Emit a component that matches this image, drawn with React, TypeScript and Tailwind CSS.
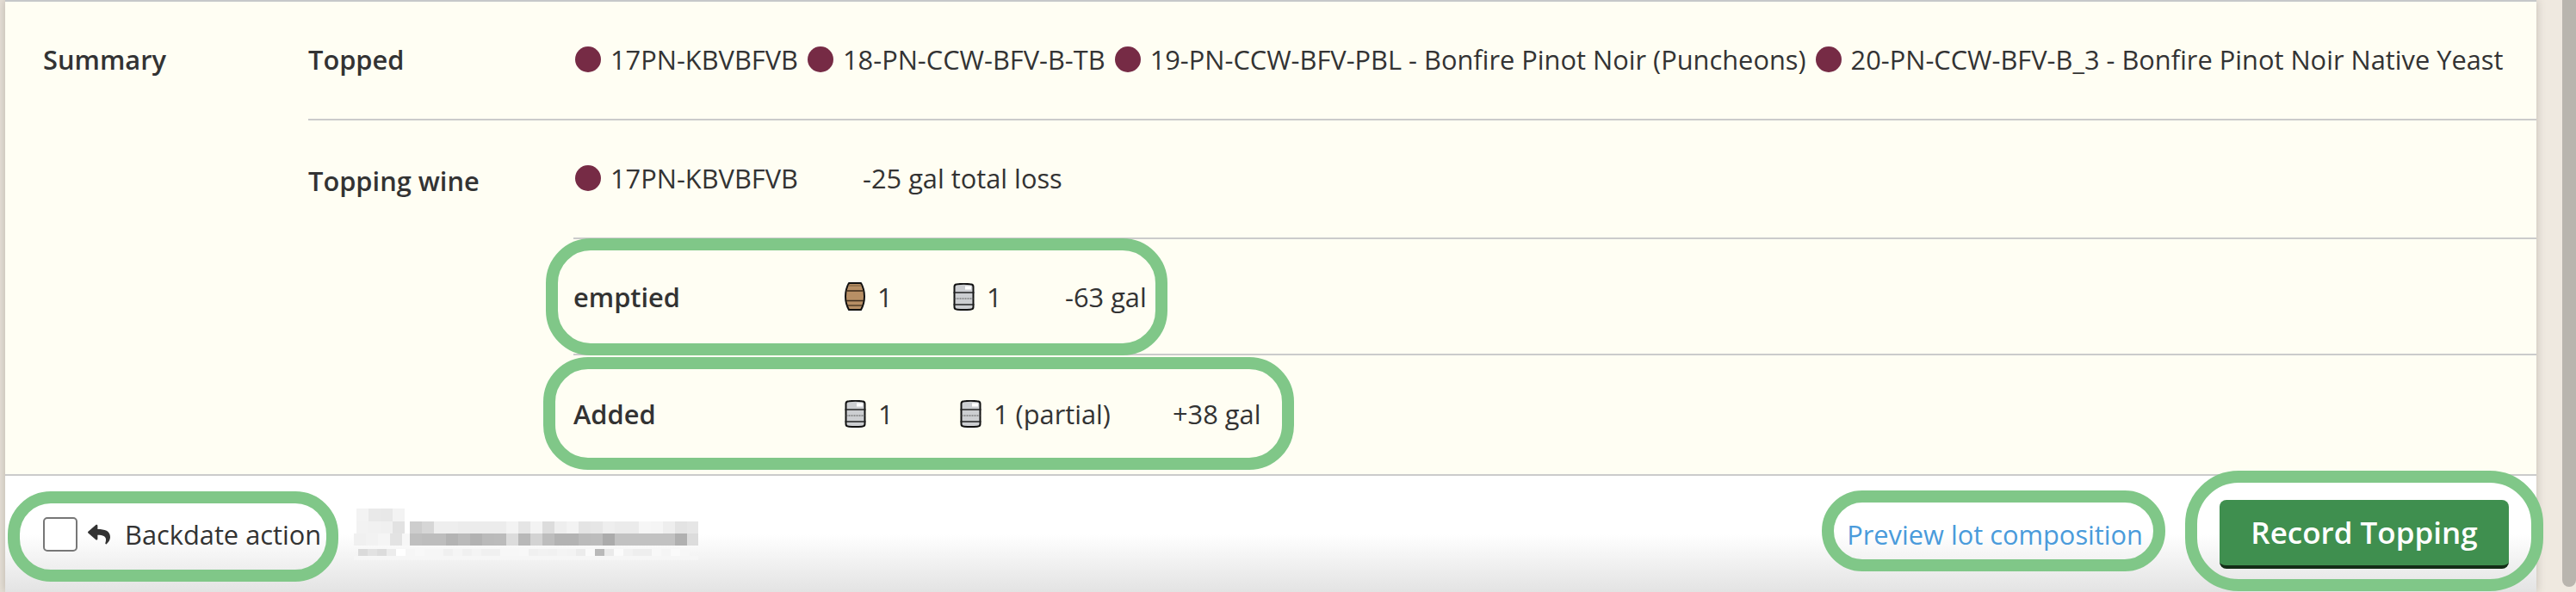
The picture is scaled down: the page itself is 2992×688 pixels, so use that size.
import React from "react";
import { FaReply } from "react-icons/fa";

function Dot() {
  return <span className="block w-[30px] h-[30px] shrink-0 rounded-full bg-[#762b45]" />;
}

function Ring({ className }: { className: string }) {
  return <div className={"absolute z-10 border-[14px] border-[#80c788] pointer-events-none " + className} />;
}

function Barrel() {
  return (
    <svg width="24" height="33" viewBox="0 0 24 33" className="block shrink-0">
      <path d="M5 1 H19 Q23 8 23 16.500 Q23 25 19 32 H5 Q1 25 1 16.500 Q1 8 5 1 Z" fill="#b78f65" stroke="#111" strokeWidth="2" strokeLinejoin="round" />
      <path d="M3 10 H21" stroke="#3a2a1a" strokeWidth="1.500" />
      <path d="M2 21.500 H22" stroke="#3a2a1a" strokeWidth="1.500" />
      <path d="M3.500 27 H20.500" stroke="#3a2a1a" strokeWidth="1.200" />
      <path d="M4 4 H20" stroke="#7a5c3c" strokeWidth="1" />
    </svg>
  );
}

function Steel() {
  return (
    <svg width="25" height="32" viewBox="0 0 25 32" className="block shrink-0">
      <path d="M1.500 4 Q1.500 1.500 5 1.300 Q12.500 0.300 20 1.300 Q23.500 1.500 23.500 4 V28 Q23.500 30.500 20 30.700 Q12.500 31.300 5 30.700 Q1.500 30.500 1.500 28 Z" fill="#ccced1" stroke="#111" strokeWidth="2" />
      <rect x="14" y="3.500" width="7" height="4" fill="#fff" />
      <path d="M0.500 11 H24.500" stroke="#222" strokeWidth="1.500" />
      <path d="M1.500 18 H23.500" stroke="#555" strokeWidth="1" strokeDasharray="2 1" />
      <path d="M0.500 25 H24.500" stroke="#222" strokeWidth="1.500" />
    </svg>
  );
}

const mosaicRows: { y: number; h: number; x: number; w: number; c: string[] }[] = [
  { y: 14, h: 15, x: 3, w: 14, c: ["#f3f3f3", "#e9e9e9", "#e8e8e8", "#f3f3f3"] },
  { y: 29, h: 14, x: 3, w: 14, c: ["#f2f2f2", "#f1f1f1", "#f0f0f0", "#e2e2e2"] },
  { y: 29, h: 14, x: 65, w: 14, c: ["#cdcdcd", "#d6d6d6", "#eeeeee", "#eeeeee", "#ececec", "#ececec", "#ececec", "#ececec", "#f3f3f3", "#e5e5e5", "#f3f3f3", "#dcdcdc", "#eeeeee", "#f3f3f3", "#e4e4e4", "#e6e6e6", "#eeeeee", "#ebebeb", "#ebebeb", "#f6f6f6", "#f5f5f5", "#eeeeee", "#e3e3e3", "#e6e6e6"] },
  { y: 43, h: 14, x: 0, w: 14, c: ["#f0f0f0", "#f2f2f2", "#f5f5f5", "#e3e3e3", "#f7f7f7"] },
  { y: 43, h: 14, x: 65, w: 14, c: ["#bfbfbf", "#bdbdbd", "#bdbdbd", "#b3b3b3", "#bababa", "#b2b2b2", "#bababa", "#bbbbbb", "#dcdcdc", "#b8b8b8", "#d3d3d3", "#bdbdbd", "#b3b3b3", "#b3b3b3", "#bbbbbb", "#bcbcbc", "#ababab", "#c2c2c2", "#c2c2c2", "#c2c2c2", "#c2c2c2", "#c2c2c2", "#b0b0b0", "#dcdcdc"] },
  { y: 61, h: 8, x: 5, w: 11, c: ["#dadada", "#e2e2e2", "#dcdcdc", "#ececec", "#ffffff", "#f6f6f6", "#f8f8f8", "#f6f6f6", "#f6f6f6", "#f0f0f0", "#f5f5f5", "#f0f0f0", "#f4f4f4", "#f0f0f0", "#f0f0f0", "#f7f7f7", "#f7f7f7", "#f8f8f8", "#f0f0f0", "#f2f2f2", "#f1f1f1", "#f4f4f4", "#f3f3f3", "#ececec", "#fafafa", "#b9b9b9", "#eaeaea", "#fbfbfb", "#f2f2f2", "#eeeeee", "#eeeeee", "#f8f8f8", "#f5f5f5", "#fafafa", "#f7f7f7"] },
];

function Mosaic() {
  return (
    <svg width="400" height="60" viewBox="0 14 400 60" className="block shrink-0 ml-[38px]">
      {mosaicRows.map((r, i) =>
        r.c.map((c, j) => <rect key={i + "-" + j} x={r.x + j * r.w} y={r.y} width={r.w} height={r.h} fill={c} />)
      )}
      <rect x="0" y="69" width="400" height="5" fill="#f7f7f7" opacity="0.7" />
    </svg>
  );
}

function Lot({ name }: { name: string }) {
  return (
    <span className="flex items-center gap-[11px] whitespace-nowrap h-[40px]">
      <Dot />
      <span>{name}</span>
    </span>
  );
}

export default function App() {
  return (
    <div className="flex w-[2992px] h-[688px] overflow-hidden bg-[#efe9e0] text-[#333333] text-[30.8px] leading-[40px] font-['Open_Sans',sans-serif]">
      <div className="w-[6px] shrink-0 bg-[#e6e0d7]" />
      <div className="relative z-10 flex flex-col w-[2940px] shrink-0 shadow-[0_0_10px_rgba(90,80,70,0.3)]">
        <div className="flex h-[553px] shrink-0 bg-[#fffef3] border-t-[2px] border-t-[#c6c8c9] border-b-[2px] border-b-[#cbcbcb]">
          <div className="w-[352px] shrink-0 pl-[44px] pt-[47px] font-semibold">Summary</div>
          <div className="flex-1 flex flex-col min-w-0">
            <div className="flex h-[138px] shrink-0 items-start border-b-[2px] border-[#cbcbcb] pt-[47px]">
              <div className="w-[310px] shrink-0 font-semibold">Topped</div>
              <div className="flex items-start gap-[11px] whitespace-nowrap">
                <Lot name="17PN-KBVBFVB" />
                <Lot name="18-PN-CCW-BFV-B-TB" />
                <Lot name="19-PN-CCW-BFV-PBL - Bonfire Pinot Noir (Puncheons)" />
                <Lot name="20-PN-CCW-BFV-B_3 - Bonfire Pinot Noir Native Yeast" />
              </div>
            </div>
            <div className="flex flex-1">
              <div className="w-[308px] shrink-0 pt-[50px] font-semibold">Topping wine</div>
              <div className="flex-1 flex flex-col min-w-0">
                <div className="flex h-[138px] shrink-0 items-center pl-[2px] pb-[2px] border-b-[2px] border-[#cbcbcb]">
                  <Lot name="17PN-KBVBFVB" />
                  <span className="ml-[75px] whitespace-nowrap">-25 gal total loss</span>
                </div>
                <div className="relative flex h-[135px] shrink-0 items-center border-b-[2px] border-[#cbcbcb]">
                  <Ring className="left-[-32px] top-[-1px] w-[722px] h-[136px] rounded-[52px]" />
                  <div className="w-[315px] font-semibold">emptied</div>
                  <div className="flex items-center gap-[14px] w-[126px]"><Barrel /><span>1</span></div>
                  <div className="flex items-center gap-[14px] w-[130px]"><Steel /><span>1</span></div>
                  <div className="whitespace-nowrap">-63 gal</div>
                </div>
                <div className="relative flex flex-1 items-center pb-[2px]">
                  <Ring className="left-[-35px] top-[2px] w-[872px] h-[131px] rounded-[52px]" />
                  <div className="w-[315px] font-semibold">Added</div>
                  <div className="flex items-center gap-[14px] w-[134px]"><Steel /><span>1</span></div>
                  <div className="flex items-center gap-[14px] w-[247px] whitespace-nowrap"><Steel /><span>1 (partial)</span></div>
                  <div className="whitespace-nowrap">+38 gal</div>
                </div>
              </div>
            </div>
          </div>
        </div>
        <div className="flex flex-1 items-center pl-[44px] pr-[32px] bg-linear-to-b from-white from-50% to-[#e3e3e3]">
          <div className="relative flex items-center h-[40px] whitespace-nowrap">
            <Ring className="left-[-41px] top-[-30px] w-[384px] h-[105px] rounded-[50px]" />
            <span className="block w-[40px] h-[40px] shrink-0 rounded-[5px] border-[2px] border-[#777777] bg-white" />
            <FaReply className="ml-[12px] w-[26px] h-[26px] shrink-0 text-[#333333]" />
            <span className="ml-[17px]">Backdate action</span>
          </div>
          <Mosaic />
          <div className="ml-auto relative flex items-center h-[40px] whitespace-nowrap text-[#4a9bdb]">
            <Ring className="left-[-29px] top-[-31px] w-[399px] h-[94px] rounded-[47px]" />
            <span>Preview lot composition</span>
          </div>
          <div className="relative ml-[89px] w-[336px] h-[80px] shrink-0">
            <Ring className="left-[-40px] top-[-34px] w-[416px] h-[140px] rounded-[62px]" />
            <button className="flex items-center justify-center w-full h-full rounded-[8px] bg-[#3f8f4f] border-b-[4px] border-[#142d17] text-white text-[35px] font-semibold">
              Record Topping
            </button>
          </div>
        </div>
      </div>
      <div className="flex-1 flex justify-end">
        <div className="w-[16px] h-[682px] bg-[#b9b5ae] rounded-b-[8px]" />
      </div>
    </div>
  );
}
